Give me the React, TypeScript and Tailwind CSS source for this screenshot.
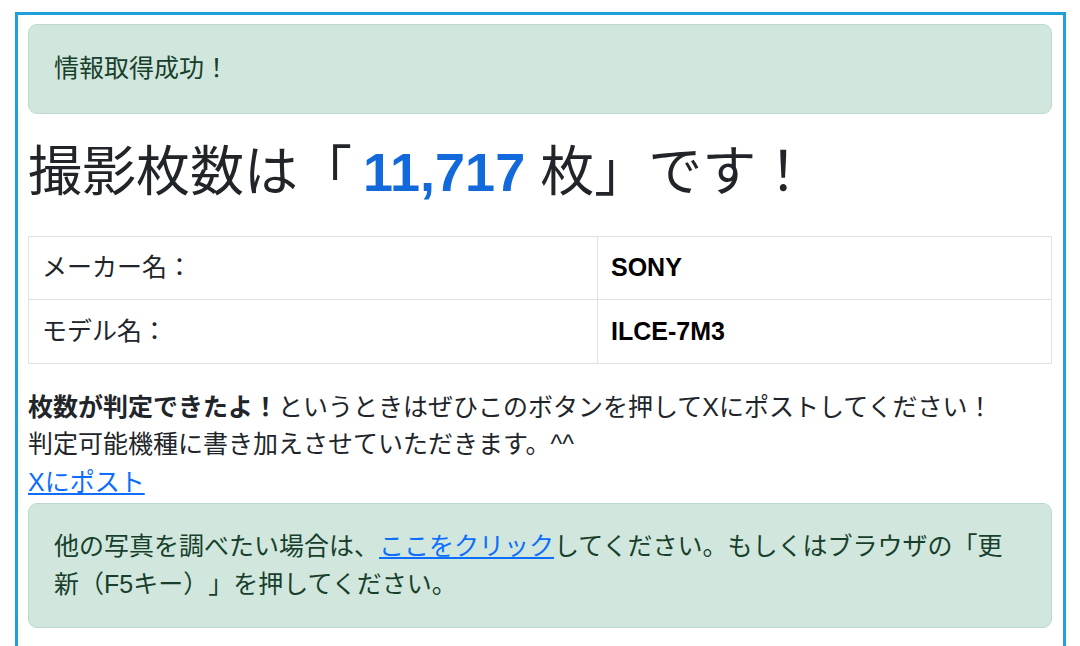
export default function App() {
  return (
    <div className="min-h-[646px] bg-white pl-[15px] pt-[12px] font-['Liberation_Sans','Noto_Sans_CJK_JP',sans-serif] text-[25px] leading-[37.5px] text-[#212529] [text-spacing-trim:space-all]">
      <div className="w-[1051px] border-[3px] border-[#1fa0d8] pl-[10px] pr-[11px] pt-[9px] pb-[20px]">
        <div className="rounded-[9px] border border-[#badbcc] bg-[#d1e7dd] p-[25px] text-[#173f2c]">
          情報取得成功！
        </div>

        <h1 className="mt-[25px] mb-[31px] text-[54px] font-normal leading-[66px]">
          撮影枚数は「<span className="ml-[11px] font-bold text-[#1169dc]">11,717</span> 枚」です！
        </h1>

        <table className="mb-[25px] w-full border-collapse border border-[#dee2e6]">
          <tbody>
            <tr className="border-b border-[#dee2e6]">
              <td className="w-[569px] border-r border-[#dee2e6] px-[13px] py-[12.5px]">メーカー名：</td>
              <td className="px-[13px] py-[12.5px] font-bold text-black">SONY</td>
            </tr>
            <tr>
              <td className="w-[569px] border-r border-[#dee2e6] px-[13px] py-[12.5px]">モデル名：</td>
              <td className="px-[13px] py-[12.5px] font-bold text-black">ILCE-7M3</td>
            </tr>
          </tbody>
        </table>

        <p>
          <strong className="font-bold">枚数が判定できたよ！</strong>というときはぜひこのボタンを押してXにポストしてください！
          <br />
          判定可能機種に書き加えさせていただきます。^^
        </p>
        <a href="#" className="text-[#0d6efd] underline">Xにポスト</a>

        <div className="mt-[2px] rounded-[9px] border border-[#badbcc] bg-[#d1e7dd] px-[25px] py-[24px] text-[#173f2c]">
          他の写真を調べたい場合は、<a href="#" className="text-[#0d6efd] underline">ここをクリック</a>してください。もしくはブラウザの「更新（F5キー）」を押してください。
        </div>
      </div>
    </div>
  );
}
